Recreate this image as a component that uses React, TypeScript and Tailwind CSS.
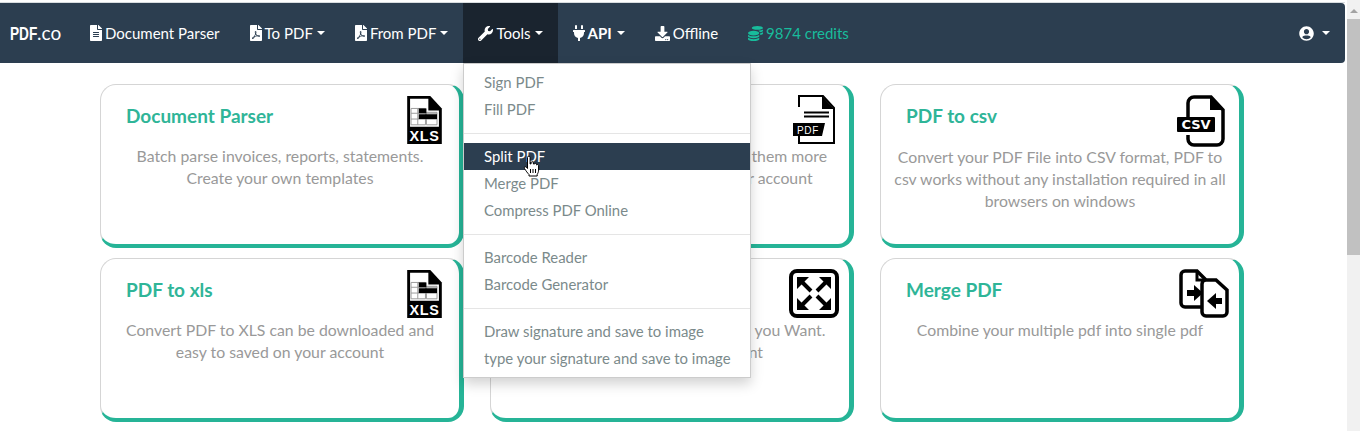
import { FaCoins, FaDownload, FaFileAlt, FaFilePdf, FaPlug, FaUserCircle, FaWrench } from "react-icons/fa";
import type { ReactNode } from "react";

function Caret({ className }: { className: string }) {
    return <span className={`${className} inline-block h-0 w-0 border-x-[4px] border-t-[4px] border-x-transparent border-t-white`} />;
}

function NavItem({
    icon,
    label,
    caret,
    active,
    bold,
}: {
    icon: ReactNode;
    label: string;
    caret?: boolean;
    active?: boolean;
    bold?: boolean;
}) {
    return (
        <div className={`flex h-full items-center px-[15px] text-[15px] text-white ${active ? "bg-[#1a242f]" : ""} ${bold ? "font-bold" : ""}`}>
            {icon}
            <span className="ml-[3px]">{label}</span>
            {caret && <Caret className={bold ? "ml-[5px]" : "ml-[4px]"} />}
        </div>
    );
}

function XlsIcon() {
    return (
        <svg width="37" height="50" viewBox="0 0 38 52">
            <path d="M1 1h24l12 13v37H1z" fill="#000" />
            <path d="M4 4h19v12h11v17H4z" fill="#fff" />
            <path d="M5 14h15v17H5zM21 18h11v13H21z" fill="none" stroke="#999" strokeWidth="1" />
            <path d="M5 19h27M5 25h27M12 14v17" stroke="#999" strokeWidth="1" />
            <rect x="13" y="14" width="8" height="5" fill="#000" />
            <rect x="13" y="20" width="19" height="5" fill="#000" />
            <text x="19" y="48" textAnchor="middle" fontFamily="'Liberation Sans', sans-serif" fontWeight="700" fontSize="15" letterSpacing="0.6" fill="#fff">
                XLS
            </text>
        </svg>
    );
}

function PdfIcon() {
    return (
        <svg width="42" height="49" viewBox="0 0 42 49">
            <path d="M6 12V1h24l11 12v35H6V36" fill="#fff" stroke="#000" strokeWidth="2" />
            <path d="M29 1v13h12z" fill="#000" />
            <path d="M11 16.500h25v2H11zM11 20.500h25v2H11z" fill="#000" />
            <path d="M0 28h32l-3 13H0z" fill="#000" />
            <text x="15" y="39" textAnchor="middle" fontFamily="'Liberation Sans', sans-serif" fontSize="10" letterSpacing="0.6" fill="#fff">
                PDF
            </text>
        </svg>
    );
}

function CsvIcon() {
    return (
        <svg width="48" height="52" viewBox="0 0 48 52">
            <path d="M11 22V8a6 6 0 0 1 6-6h17l12 13v29a6 6 0 0 1-6 6H17a6 6 0 0 1-6-6v-4" fill="#fff" stroke="#000" strokeWidth="3.500" />
            <path d="M33 2v13h13z" fill="#000" />
            <rect x="0" y="22" width="38" height="15" rx="1" fill="#000" />
            <text x="19" y="34" textAnchor="middle" fontFamily="'DejaVu Sans', sans-serif" fontWeight="700" fontSize="13" fill="#fff">
                CSV
            </text>
        </svg>
    );
}

function ExpandIcon() {
    return (
        <svg width="50" height="49" viewBox="0 0 50 49">
            <rect x="2" y="2" width="46" height="45" rx="6" fill="none" stroke="#000" strokeWidth="4" />
            <path d="M8 8h12L8 20zM42 8v12L30 8zM8 41V29l12 12zM42 41H30l12-12z" fill="#000" />
            <path d="M12 12l10 10M38 12L28 22M12 37l10-10M38 37L28 27" stroke="#000" strokeWidth="4" />
        </svg>
    );
}

function MergeIcon() {
    return (
        <svg width="50" height="49" viewBox="0 0 50 49">
            <path d="M6 2h12l8 8v24a4 4 0 0 1-4 4H6a4 4 0 0 1-4-4V6a4 4 0 0 1 4-4z" fill="#fff" stroke="#000" strokeWidth="3.500" />
            <path d="M27 11h10l11 10v22a4 4 0 0 1-4 4H27a4 4 0 0 1-4-4V15a4 4 0 0 1 4-4z" fill="#fff" stroke="#000" strokeWidth="3.500" />
            <path d="M18 2v9h8" fill="none" stroke="#000" strokeWidth="3" />
            <path d="M8 21h7v-5l9 8-9 8v-5H8zM43 29h-6v-5l-9 8 9 8v-5h6z" fill="#000" />
        </svg>
    );
}

function HandCursor() {
    return (
        <svg width="17" height="22" viewBox="0 0 16 22" className="absolute left-[59px] top-[12px]">
            <path
                d="M4 2.500a1.300 1.300 0 0 1 2.600 0V9l1-.2V7.600a1.200 1.200 0 0 1 2.300 0V9l1-.1a1.200 1.200 0 0 1 2.200.5v.6a1.100 1.100 0 0 1 2 .6v4.500c0 2-.8 3-1.400 4.400v1.500H5.500v-1.500C4 18 2.500 16 1 13.500c-.7-1.400.8-2.400 1.800-1.300L4 13.500z"
                fill="#fff"
                stroke="#000"
                strokeWidth="1"
            />
            <path d="M7 14v4M9.500 14v4M12 14v4" stroke="#000" strokeWidth="1" />
        </svg>
    );
}

function Card({
    title,
    lines,
    icon,
    iconRight,
    tall,
}: {
    title: string;
    lines: string[];
    icon: ReactNode;
    iconRight: string;
    tall?: boolean;
}) {
    return (
        <div className="relative h-[164px] rounded-[16px] border border-[#d5d5d5] border-r-[5px] border-b-[4px] border-r-[#26b497] border-b-[#26b497] bg-white">
            <div className={`absolute top-[10px] ${iconRight}`}>{icon}</div>
            <h3 className="pl-[25px] pt-[19px] text-[19px] font-bold leading-[24px] text-[#2fb598]">{title}</h3>
            <div className={`px-[8px] text-center text-[15.8px] leading-[22px] text-[#999] ${tall ? "pt-[18px]" : "pt-[17px]"}`}>
                {lines.map((line) => (
                    <div key={line}>{line}</div>
                ))}
            </div>
        </div>
    );
}

function MenuItem({ label, active }: { label: string; active?: boolean }) {
    return (
        <div className={`relative h-[27px] pl-[20px] text-[14.9px] leading-[27px] ${active ? "bg-[#2c3e50] text-white" : "text-[#7b8a8b]"}`}>
            {label}
            {active && <HandCursor />}
        </div>
    );
}

function Divider() {
    return <div className="mb-[9px] mt-[10px] h-px bg-[#e5e5e5]" />;
}

export default function App() {
    return (
        <div className="relative flex h-[431px] w-[1360px] overflow-hidden bg-white font-['Lato',sans-serif]">
            <div className="flex min-w-0 flex-1 flex-col">
                {/* Navbar */}
                <div className="h-[3px] shrink-0 border-b border-[#d8dde0]" />
                <nav className="flex h-[60px] shrink-0 items-center rounded-br-[4px] rounded-tr-[4px] bg-[#2c3e50]">
                    <div className="flex w-[75px] items-baseline pl-[10px] text-white">
                        <span className="w-[27px] origin-left scale-x-[0.72] font-['Liberation_Sans',sans-serif] text-[19px] font-bold leading-none">PDF</span>
                        <span className="text-[19px] leading-none">.co</span>
                    </div>
                    <NavItem icon={<FaFileAlt className="h-[16px] w-[12px]" />} label="Document Parser" />
                    <NavItem icon={<FaFilePdf className="h-[16px] w-[12px]" />} label="To PDF" caret />
                    <NavItem icon={<FaFilePdf className="h-[16px] w-[12px]" />} label="From PDF" caret />
                    <NavItem icon={<FaWrench size={15} />} label="Tools" caret active />
                    <NavItem icon={<FaPlug className="h-[16px] w-[12px]" />} label="API" caret bold />
                    <NavItem icon={<FaDownload size={15} />} label="Offline" />
                    <div className="flex h-full items-center px-[15px] text-[15px] text-[#18bc9c]">
                        <FaCoins size={15} />
                        <span className="ml-[3px]">9874 credits</span>
                    </div>
                    <div className="ml-auto flex items-center pr-[15px] text-white">
                        <FaUserCircle size={15} />
                        <Caret className="ml-[8px]" />
                    </div>
                </nav>

                {/* Cards */}
                <div className="grid grid-cols-3 gap-x-[26px] gap-y-[10px] pl-[100px] pr-[101px] pt-[21px]">
                    <Card title="Document Parser" lines={["Batch parse invoices, reports, statements.", "Create your own templates"]} icon={<XlsIcon />} iconRight="right-[16px]" />
                    <Card title="PDF Editor" lines={["Edit & sign your PDF files to make them more", "more attractive and save on your account"]} icon={<PdfIcon />} iconRight="right-[14px]" />
                    <Card
                        title="PDF to csv"
                        lines={["Convert your PDF File into CSV format, PDF to", "csv works without any installation required in all", "browsers on windows"]}
                        icon={<CsvIcon />}
                        iconRight="right-[14px]"
                        tall
                    />
                    <Card title="PDF to xls" lines={["Convert PDF to XLS can be downloaded and", "easy to saved on your account"]} icon={<XlsIcon />} iconRight="right-[16px]" />
                    <Card title="Split PDF" lines={["Split PDF into any number of page you Want.", "and save it to your account"]} icon={<ExpandIcon />} iconRight="right-[10px]" />
                    <Card title="Merge PDF" lines={["Combine your multiple pdf into single pdf"]} icon={<MergeIcon />} iconRight="right-[10px]" />
                </div>
            </div>

            {/* Scrollbar */}
            <div className="w-[15px] shrink-0 pl-[2px]">
                <div className="flex h-full flex-col items-center bg-[#f1f1f1]">
                    <div className="mt-[9px] h-0 w-0 border-x-[4px] border-b-[4px] border-x-transparent border-b-[#a3a3a3]" />
                    <div className="mt-[6px] h-[236px] w-full bg-[#c1c1c1]" />
                </div>
            </div>

            {/* Tools dropdown */}
            <div className="absolute left-[463px] top-[63px] h-[315px] w-[288px] border border-[#ccc] bg-white pt-[5px] shadow-[0_6px_12px_rgba(0,0,0,0.175)]">
                <MenuItem label="Sign PDF" />
                <MenuItem label="Fill PDF" />
                <Divider />
                <MenuItem label="Split PDF" active />
                <MenuItem label="Merge PDF" />
                <MenuItem label="Compress PDF Online" />
                <Divider />
                <MenuItem label="Barcode Reader" />
                <MenuItem label="Barcode Generator" />
                <Divider />
                <MenuItem label="Draw signature and save to image" />
                <MenuItem label="type your signature and save to image" />
            </div>
        </div>
    );
}
